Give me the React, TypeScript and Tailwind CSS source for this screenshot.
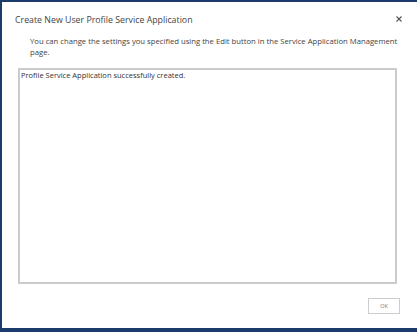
const App = () => {
  return (
    <div
      className="w-[417px] h-[332px] bg-[#1d3a6c] pt-[2px] pl-[2px] pb-[4px] overflow-hidden"
      style={{ fontFamily: '"Open Sans", "Noto Sans", sans-serif' }}
    >
      <div className="relative bg-white h-full flex flex-col">
        <div className="pl-[13px] pt-[12px] text-[8.8px] text-[#444] leading-[12px]">
          Create New User Profile Service Application
        </div>
        <svg
          className="absolute right-[15px] top-[14px]"
          width="6"
          height="6"
          viewBox="0 0 6 6"
        >
          <path d="M0.5 0.5 L5.5 5.5 M5.5 0.5 L0.5 5.5" stroke="#555" strokeWidth="1.1" />
        </svg>
        <div className="pl-[28px] pt-[10px] text-[7.7px] text-[#444] leading-[11px] whitespace-nowrap">
          You can change the settings you specified using the Edit button in the Service Application Management
          <br />
          page.
        </div>
        <div className="ml-[16px] mr-[20px] mt-[10px] h-[216px] border-2 border-[#cbcbcb] px-[1px] text-[7.5px] text-[#333] leading-[11px]">
          Profile Service Application successfully created.
        </div>
        <div className="flex justify-end pr-[17px] pt-[14px]">
          <div className="w-[32px] h-[16px] border border-[#cdcdcd] flex items-center justify-center text-[5.5px] text-[#777]">
            OK
          </div>
        </div>
      </div>
    </div>
  );
};

export default App;
